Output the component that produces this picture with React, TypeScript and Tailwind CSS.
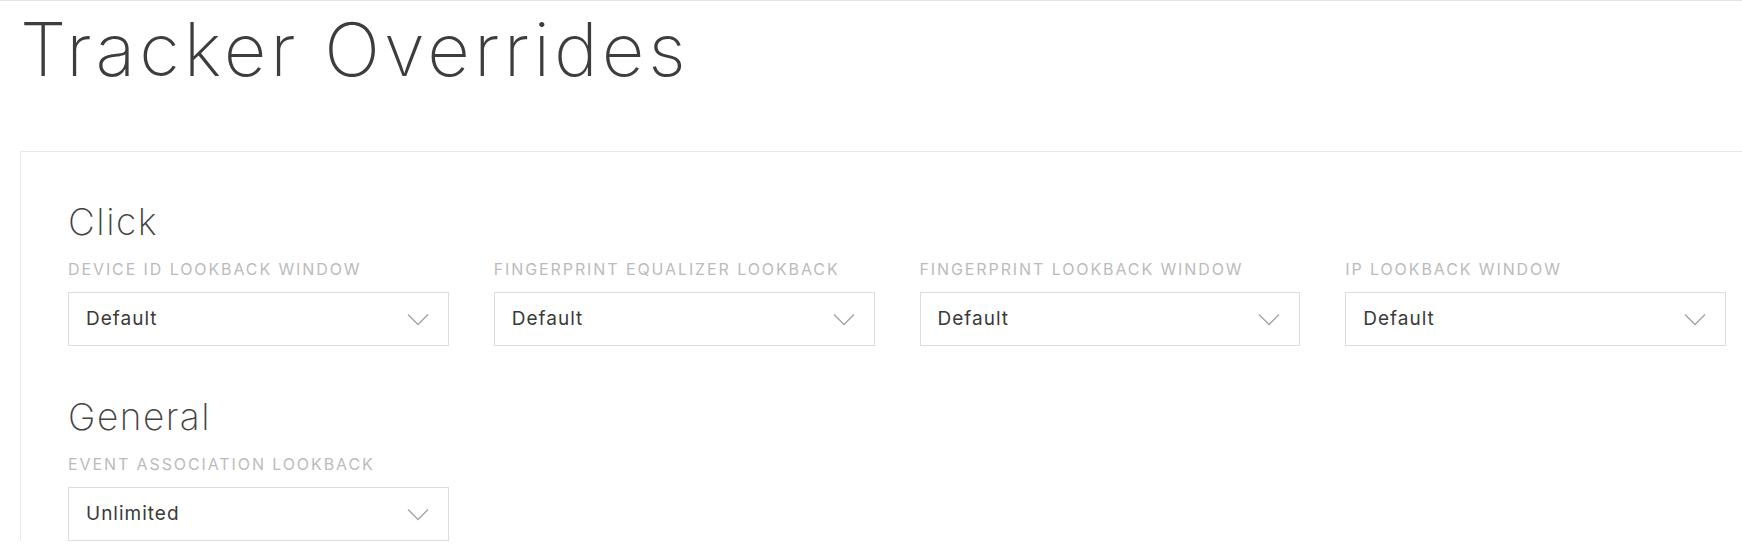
import React from "react";

const Chevron = () => (
  <svg width="22" height="13" viewBox="0 0 22 13" fill="none" className="shrink-0">
    <path d="M1 1.5 L11 11.5 L21 1.5" stroke="#a3a3a3" strokeWidth="1.3" />
  </svg>
);

const Field = ({ label, value }: { label: string; value: string }) => (
  <div className="flex flex-col">
    <div className="text-[16px] leading-[15px] tracking-[1.9px] uppercase text-[#bbbbbb] font-normal whitespace-nowrap">
      {label}
    </div>
    <div className="mt-[15px] h-[54px] border border-[#dcdcdc] flex items-center justify-between pl-[17px] pr-[19px] bg-white">
      <span className="text-[19px] text-[#3a3a3a] tracking-[1px]">{value}</span>
      <Chevron />
    </div>
  </div>
);

const Section = ({ title, children }: { title: string; children: React.ReactNode }) => (
  <div className="flex flex-col">
    <div className="text-[37px] leading-[36px] font-extralight text-[#444] tracking-[1.5px] mb-[22px]">{title}</div>
    {children}
  </div>
);

export default function App() {
  return (
    <div className="w-full h-[550px] overflow-hidden bg-white border-t border-[#e4e4e4] font-['Inter',sans-serif]">
      <h1 className="pl-[20px] pt-[12px] text-[74px] leading-[72px] font-extralight text-[#3d3d3d] tracking-[4px]">
        Tracker Overrides
      </h1>
      <div className="ml-[20px] mt-[66px] border-t border-l border-[#e8e8e8] pl-[47px] pr-[16px] pt-[52px]">
        <Section title="Click">
          <div className="grid grid-cols-4 gap-x-[45px]">
            <Field label="Device ID Lookback Window" value="Default" />
            <Field label="Fingerprint Equalizer Lookback" value="Default" />
            <Field label="Fingerprint Lookback Window" value="Default" />
            <Field label="IP Lookback Window" value="Default" />
          </div>
        </Section>
        <div className="mt-[53px]">
          <Section title="General">
            <div className="grid grid-cols-4 gap-x-[45px]">
              <Field label="Event Association Lookback" value="Unlimited" />
            </div>
          </Section>
        </div>
      </div>
    </div>
  );
}
